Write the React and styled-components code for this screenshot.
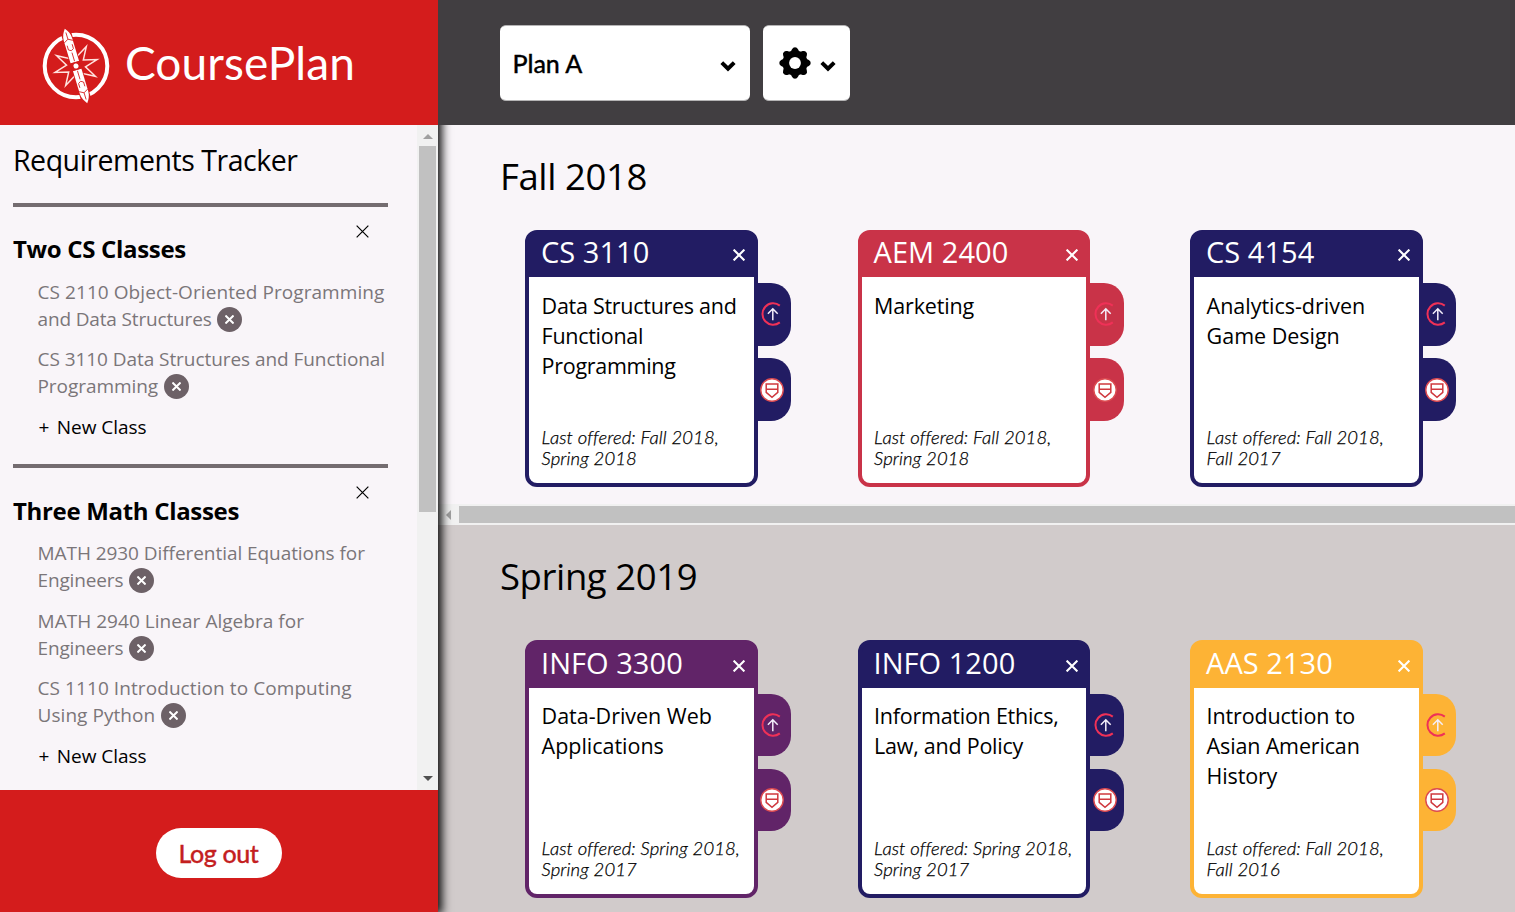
import React from 'react';
import styled, { createGlobalStyle } from 'styled-components';

const Global = createGlobalStyle`
  * { box-sizing: border-box; }
  body { margin: 0; overflow: hidden; font-family: 'Open Sans', 'Noto Sans', sans-serif; color: #000; }
  h1, h2, h3, h4, p, ul { margin: 0; padding: 0; font-weight: 400; }
  button { border: 0; padding: 0; background: none; font: inherit; color: inherit; }
  svg { display: block; flex: none; }
`;

const Page = styled.div`
  display: flex;
  width: 1515px;
  height: 912px;
  overflow: hidden;
`;

/* ---------- sidebar ---------- */
const Sidebar = styled.aside`
  position: relative;
  z-index: 1;
  display: flex;
  flex-direction: column;
  flex: none;
  width: 438px;
  box-shadow: 2px 0 9px 2px rgba(0, 0, 0, 0.95);
`;

const Brand = styled.header`
  display: flex;
  align-items: center;
  height: 125px;
  padding: 7px 0 0 39.5px;
  background: #d41c1c;
  color: #fff;
`;

const BrandName = styled.h1`
  margin: -7px 0 0 13.5px;
  font: 400 46px/60px Lato, sans-serif;
  letter-spacing: 0.1px;
  white-space: nowrap;
`;

const Tracker = styled.div`
  display: flex;
  height: 665px;
  background: #f9f5f9;
`;

const TrackerBody = styled.div`
  flex: 1;
  padding-left: 13px;
`;

const TrackerTitle = styled.h2`
  height: 78px;
  padding-top: 15px;
  font-size: 28.5px;
  line-height: 40px;
  letter-spacing: -0.47px;
  white-space: nowrap;
`;

const Requirement = styled.section`
  width: 375px;
  height: ${(p) => p.$height}px;
  border-top: 4px solid #746c70;
`;

const RequirementHead = styled.div`
  display: flex;
  justify-content: space-between;
  height: 71.6px;
  padding: 18px 19px 0 0;
`;

const RequirementTitle = styled.h3`
  padding-top: 8.2px;
  font-size: 24px;
  font-weight: 700;
  line-height: 32px;
  letter-spacing: -0.32px;
  white-space: nowrap;
`;

const ClassList = styled.ul`
  display: flex;
  flex-direction: column;
  gap: 13.6px;
  padding-left: 24.5px;
  list-style: none;
`;

const ClassItem = styled.li`
  font-size: 19px;
  line-height: 27px;
  color: #7b7679;
  white-space: nowrap;
`;

const ClassLine = styled.div`
  display: flex;
  align-items: center;
  height: 27px;
  letter-spacing: ${(p) => p.$tracking || -0.15}px;
`;

const RemoveBadge = styled.button`
  display: flex;
  align-items: center;
  justify-content: center;
  width: 25px;
  height: 25px;
  margin-left: 5.5px;
  border-radius: 50%;
  background: #6d6167;
`;

const NewClass = styled.button`
  display: flex;
  gap: 7.5px;
  margin-top: 14px;
  padding-left: 25.5px;
  font-size: 19px;
  line-height: 27px;
  letter-spacing: -0.05px;
`;

const VScroll = styled.div`
  display: flex;
  flex-direction: column;
  align-items: center;
  justify-content: space-between;
  width: 21px;
  padding: 9px 0;
  background: #f1f1f1;
`;

const VThumb = styled.div`
  width: 17px;
  height: 366px;
  margin: 7px 0 auto;
  background: #c1c1c1;
`;

const Arrow = styled.span`
  width: 0;
  height: 0;
  border: 5px solid transparent;
  ${(p) => p.$dir === 'up' && 'border-top: 0; border-bottom-color: #a0a0a0;'}
  ${(p) => p.$dir === 'down' && 'border-bottom: 0; border-top-color: #505050;'}
  ${(p) => p.$dir === 'left' && 'border-left: 0; border-right-color: #a0a0a0;'}
`;

const SidebarFooter = styled.footer`
  display: flex;
  justify-content: center;
  height: 122px;
  padding-top: 38px;
  background: #d41c1c;
`;

const LogoutButton = styled.button`
  width: 125.5px;
  height: 50px;
  padding: 1px 1px 0 0;
  border-radius: 25px;
  background: #fff;
  color: #c4201f;
  font: 500 25px/49px Lato, sans-serif;
  -webkit-text-stroke: 0.3px;
  letter-spacing: -0.4px;
`;

/* ---------- main area ---------- */
const Main = styled.main`
  display: flex;
  flex-direction: column;
  flex: 1;
  min-width: 0;
`;

const TopBar = styled.div`
  position: relative;
  z-index: 2;
  display: flex;
  gap: 13px;
  height: 125px;
  padding: 25px 0 0 62px;
  background: #413e41;
`;

const PlanSelect = styled.button`
  display: flex;
  align-items: center;
  justify-content: space-between;
  width: 250px;
  height: 76px;
  padding: 0 14px 0 12.5px;
  border: 1px solid #b5b4b5;
  border-width: 1px 0;
  border-radius: 6px;
  background: #fff;
  font: 500 25px/30px Lato, sans-serif;
  -webkit-text-stroke: 0.3px;
  letter-spacing: -0.05px;
`;

const SettingsButton = styled(PlanSelect)`
  width: 87px;
  padding: 0 14px 0 15.5px;
`;

const ChevronSlot = styled.span`
  margin-top: 6px;
`;

const Semester = styled.section`
  height: ${(p) => p.$height}px;
  flex: none;
  padding: 26px 0 0 62px;
  background: ${(p) => p.$bg};
`;

const SemesterTitle = styled.h2`
  height: ${(p) => p.$height}px;
  font-size: 36.5px;
  line-height: 50px;
  letter-spacing: -0.4px;
  white-space: nowrap;
`;

const CardRow = styled.div`
  display: flex;
  gap: 66px;
  padding-left: 25px;
`;

const CardSlot = styled.div`
  display: flex;
  flex: none;
  width: 266.5px;
`;

const Card = styled.article`
  display: flex;
  flex-direction: column;
  width: 232.6px;
  height: 257.3px;
  flex: none;
  border: 4px solid ${(p) => p.$color};
  border-radius: 12px;
  background: ${(p) => p.$color};
`;

const CardHead = styled.div`
  display: flex;
  justify-content: space-between;
  height: 43.3px;
  padding: 0 8.6px 0 12px;
  color: #fff;
`;

const CardCode = styled.h3`
  margin-top: -1.6px;
  font-size: 29px;
  line-height: 40px;
  letter-spacing: 0.05px;
  white-space: nowrap;
`;

const CloseButton = styled.button`
  align-self: flex-start;
  margin-top: ${(p) => p.$top}px;
`;

const CardBody = styled.div`
  display: flex;
  flex-direction: column;
  justify-content: space-between;
  flex: 1;
  padding: 13.7px 0 14px 12.6px;
  border-radius: 0 0 8px 8px;
  background: #fff;
`;

const CourseName = styled.p`
  font-size: 21.5px;
  line-height: 30px;
  letter-spacing: ${(p) => p.$tracking || -0.15}px;
  white-space: pre;
`;

const Offered = styled.p`
  font: italic 300 18.5px/21px Lato, sans-serif;
  -webkit-text-stroke: 0.25px;
  letter-spacing: 0.1px;
  white-space: pre;
`;

const Tabs = styled.div`
  display: flex;
  flex-direction: column;
  gap: 12.2px;
  padding-top: 53.2px;
`;

const Tab = styled.button`
  display: flex;
  align-items: center;
  justify-content: center;
  width: 34.8px;
  height: 62.8px;
  margin-left: -1px;
  padding: 0 3.5px ${(p) => p.$lift || 0}px 0;
  border-radius: 0 20px 20px 0;
  background: ${(p) => p.$color};
`;

const HScroll = styled.div`
  display: flex;
  align-items: center;
  flex: none;
  gap: 8px;
  height: 21px;
  padding-left: 8px;
  background: #f1f1f1;
`;

const HThumb = styled.div`
  flex: 1;
  height: 17px;
  background: #c1c1c1;
`;

/* ---------- icons ---------- */
const Cross = ({ size, stroke, color }) => (
  <svg width={size} height={size} viewBox="0 0 12 12" fill="none" stroke={color} strokeWidth={stroke}>
    <path d="M.6.6 11.4 11.4M11.4.6.6 11.4" />
  </svg>
);

const Chevron = () => (
  <svg width="16" height="12" viewBox="0 0 16 12" fill="none" stroke="#000" strokeWidth="4">
    <path d="M1.8 2.6 8 8.6l6.2-6" />
  </svg>
);

const Gear = () => (
  <svg width="32" height="32" viewBox="-16 -16 32 32">
    {[0, 45, 90, 135, 180, 225, 270, 315].map((a) => (
      <path key={a} d="M-6-10Q-3.6-11.8-3-13.8Q-2-15.7 0-15.7T3-13.8Q3.6-11.8 6-10V0H-6Z" transform={`rotate(${a})`} />
    ))}
    <circle r="12.4" />
    <circle r="5.9" fill="#fff" />
  </svg>
);

const starPoints = Array.from({ length: 16 }, (_, i) => {
  const angle = ((i * 22.5 - 17) * Math.PI) / 180;
  const r = i % 2 ? 9.5 : 22;
  return `${(r * Math.sin(angle)).toFixed(2)},${(-r * Math.cos(angle)).toFixed(2)}`;
}).join(' ');

const PencilHalf = () => (
  <>
    <path d="M0-38.8C2.3-36 4.4-32 4.4-28V-4H-4.4V-28C-4.4-32-2.3-36 0-38.8Z" fill="#fff" />
    <path d="M0-35V-28M-4.4-25.5 0-28 4.4-25.5M-2.6-22V-17.5Q0-14.5 2.6-17.5V-22M0-14V-5" fill="none" stroke="#d41c1c" strokeWidth="0.8" />
  </>
);

const Logo = () => (
  <svg width="72" height="80" viewBox="-36 -40 72 80">
    <circle r="31.3" fill="none" stroke="#fff" strokeWidth="4" />
    <polygon points={starPoints} fill="none" stroke="#ffe3df" strokeWidth="1.5" />
    <g transform="rotate(-16.8)">
      <rect x="-5.2" y="-34" width="10.4" height="68" fill="#d41c1c" />
      <PencilHalf />
      <g transform="rotate(180)">
        <PencilHalf />
      </g>
      <path d="M-5-4H5V4H-5Z" fill="#d41c1c" />
      <circle r="2.5" fill="#fff" />
    </g>
  </svg>
);

const MoveIcon = ({ ring }) => (
  <svg width="24" height="24" viewBox="0 0 24 24" fill="none">
    <path d="M19.8 3.6A10.7 10.7 0 1 0 19.8 20.4" stroke={ring} strokeWidth="2" />
    <path d="M12.8 18.2V6.8M7.9 11.7l4.9-5 4.9 5" stroke="#f4eefa" strokeWidth="1.5" />
  </svg>
);

const EditIcon = () => (
  <svg width="24" height="24" viewBox="0 0 24 24">
    <circle cx="12" cy="12" r="11.2" fill="#fff" stroke="#dc4a50" strokeWidth="1.4" />
    <path d="M6.2 6h11.6v8.3L12 19.2l-5.8-4.9ZM6.2 11.2h11.6" fill="none" stroke="#cf383e" strokeWidth="1.5" />
  </svg>
);

/* ---------- data ---------- */
const requirements = [
  {
    title: 'Two CS Classes',
    height: 261.4,
    classes: [
      { first: 'CS 2110 Object-Oriented Programming', last: 'and Data Structures', tracking: 0.07 },
      { first: 'CS 3110 Data Structures and Functional', last: 'Programming', tracking: -0.06, lastTracking: -0.06 },
    ],
  },
  {
    title: 'Three Math Classes',
    height: 325.6,
    classes: [
      { first: 'MATH 2930 Differential Equations for', last: 'Engineers', tracking: -0.06 },
      { first: 'MATH 2940 Linear Algebra for', last: 'Engineers', tracking: 0.04 },
      { first: 'CS 1110 Introduction to Computing', last: 'Using Python', tracking: 0.08, lastTracking: 0.06 },
    ],
  },
];

const navy = '#221c63';
const fall = [
  { code: 'CS 3110', color: navy, tracking: -0.28, name: 'Data Structures and\nFunctional\nProgramming', offered: 'Last offered: Fall 2018,\nSpring 2018' },
  { code: 'AEM 2400', color: '#c93348', name: 'Marketing', offered: 'Last offered: Fall 2018,\nSpring 2018' },
  { code: 'CS 4154', color: navy, tracking: -0.02, name: 'Analytics-driven\nGame Design', offered: 'Last offered: Fall 2018,\nFall 2017' },
];
const spring = [
  { code: 'INFO 3300', color: '#612468', tracking: -0.02, name: 'Data-Driven Web\nApplications', offered: 'Last offered: Spring 2018,\nSpring 2017' },
  { code: 'INFO 1200', color: navy, tracking: -0.25, name: 'Information Ethics,\nLaw, and Policy', offered: 'Last offered: Spring 2018,\nSpring 2017' },
  { code: 'AAS 2130', color: '#fdb335', name: 'Introduction to\nAsian American\nHistory', offered: 'Last offered: Fall 2018,\nFall 2016' },
];

const CourseCard = ({ course }) => (
  <CardSlot>
    <Card $color={course.color}>
      <CardHead>
        <CardCode>{course.code}</CardCode>
        <CloseButton $top={15.2}>
          <Cross size={12} stroke={2.1} color="#fff" />
        </CloseButton>
      </CardHead>
      <CardBody>
        <CourseName $tracking={course.tracking}>{course.name}</CourseName>
        <Offered>{course.offered}</Offered>
      </CardBody>
    </Card>
    <Tabs>
      <Tab $color={course.color} $lift={0.8}>
        <MoveIcon ring="#ef3157" />
      </Tab>
      <Tab $color={course.color}>
        <EditIcon />
      </Tab>
    </Tabs>
  </CardSlot>
);

export default function App() {
  return (
    <Page>
      <Global />
      <Sidebar>
        <Brand>
          <Logo />
          <BrandName>CoursePlan</BrandName>
        </Brand>
        <Tracker>
          <TrackerBody>
            <TrackerTitle>Requirements Tracker</TrackerTitle>
            {requirements.map((req) => (
              <Requirement key={req.title} $height={req.height}>
                <RequirementHead>
                  <RequirementTitle>{req.title}</RequirementTitle>
                  <CloseButton $top={0.1}>
                    <Cross size={13} stroke={1.1} color="#000" />
                  </CloseButton>
                </RequirementHead>
                <ClassList>
                  {req.classes.map((c) => (
                    <ClassItem key={c.first}>
                      <ClassLine $tracking={c.tracking}>{c.first}</ClassLine>
                      <ClassLine $tracking={c.lastTracking}>
                        {c.last}
                        <RemoveBadge>
                          <Cross size={9} stroke={2.6} color="#fff" />
                        </RemoveBadge>
                      </ClassLine>
                    </ClassItem>
                  ))}
                </ClassList>
                <NewClass>
                  <span>+</span>
                  <span>New Class</span>
                </NewClass>
              </Requirement>
            ))}
          </TrackerBody>
          <VScroll>
            <Arrow $dir="up" />
            <VThumb />
            <Arrow $dir="down" />
          </VScroll>
        </Tracker>
        <SidebarFooter>
          <LogoutButton>Log out</LogoutButton>
        </SidebarFooter>
      </Sidebar>
      <Main>
        <TopBar>
          <PlanSelect>
            Plan A
            <ChevronSlot>
              <Chevron />
            </ChevronSlot>
          </PlanSelect>
          <SettingsButton>
            <Gear />
            <ChevronSlot>
              <Chevron />
            </ChevronSlot>
          </SettingsButton>
        </TopBar>
        <Semester $height={379} $bg="#f9f5f9">
          <SemesterTitle $height={79}>Fall 2018</SemesterTitle>
          <CardRow>
            {fall.map((c) => (
              <CourseCard key={c.code} course={c} />
            ))}
          </CardRow>
        </Semester>
        <HScroll>
          <Arrow $dir="left" />
          <HThumb />
        </HScroll>
        <Semester $height={387} $bg="#d1cbcb">
          <SemesterTitle $height={89.4}>Spring 2019</SemesterTitle>
          <CardRow>
            {spring.map((c) => (
              <CourseCard key={c.code} course={c} />
            ))}
          </CardRow>
        </Semester>
      </Main>
    </Page>
  );
}
